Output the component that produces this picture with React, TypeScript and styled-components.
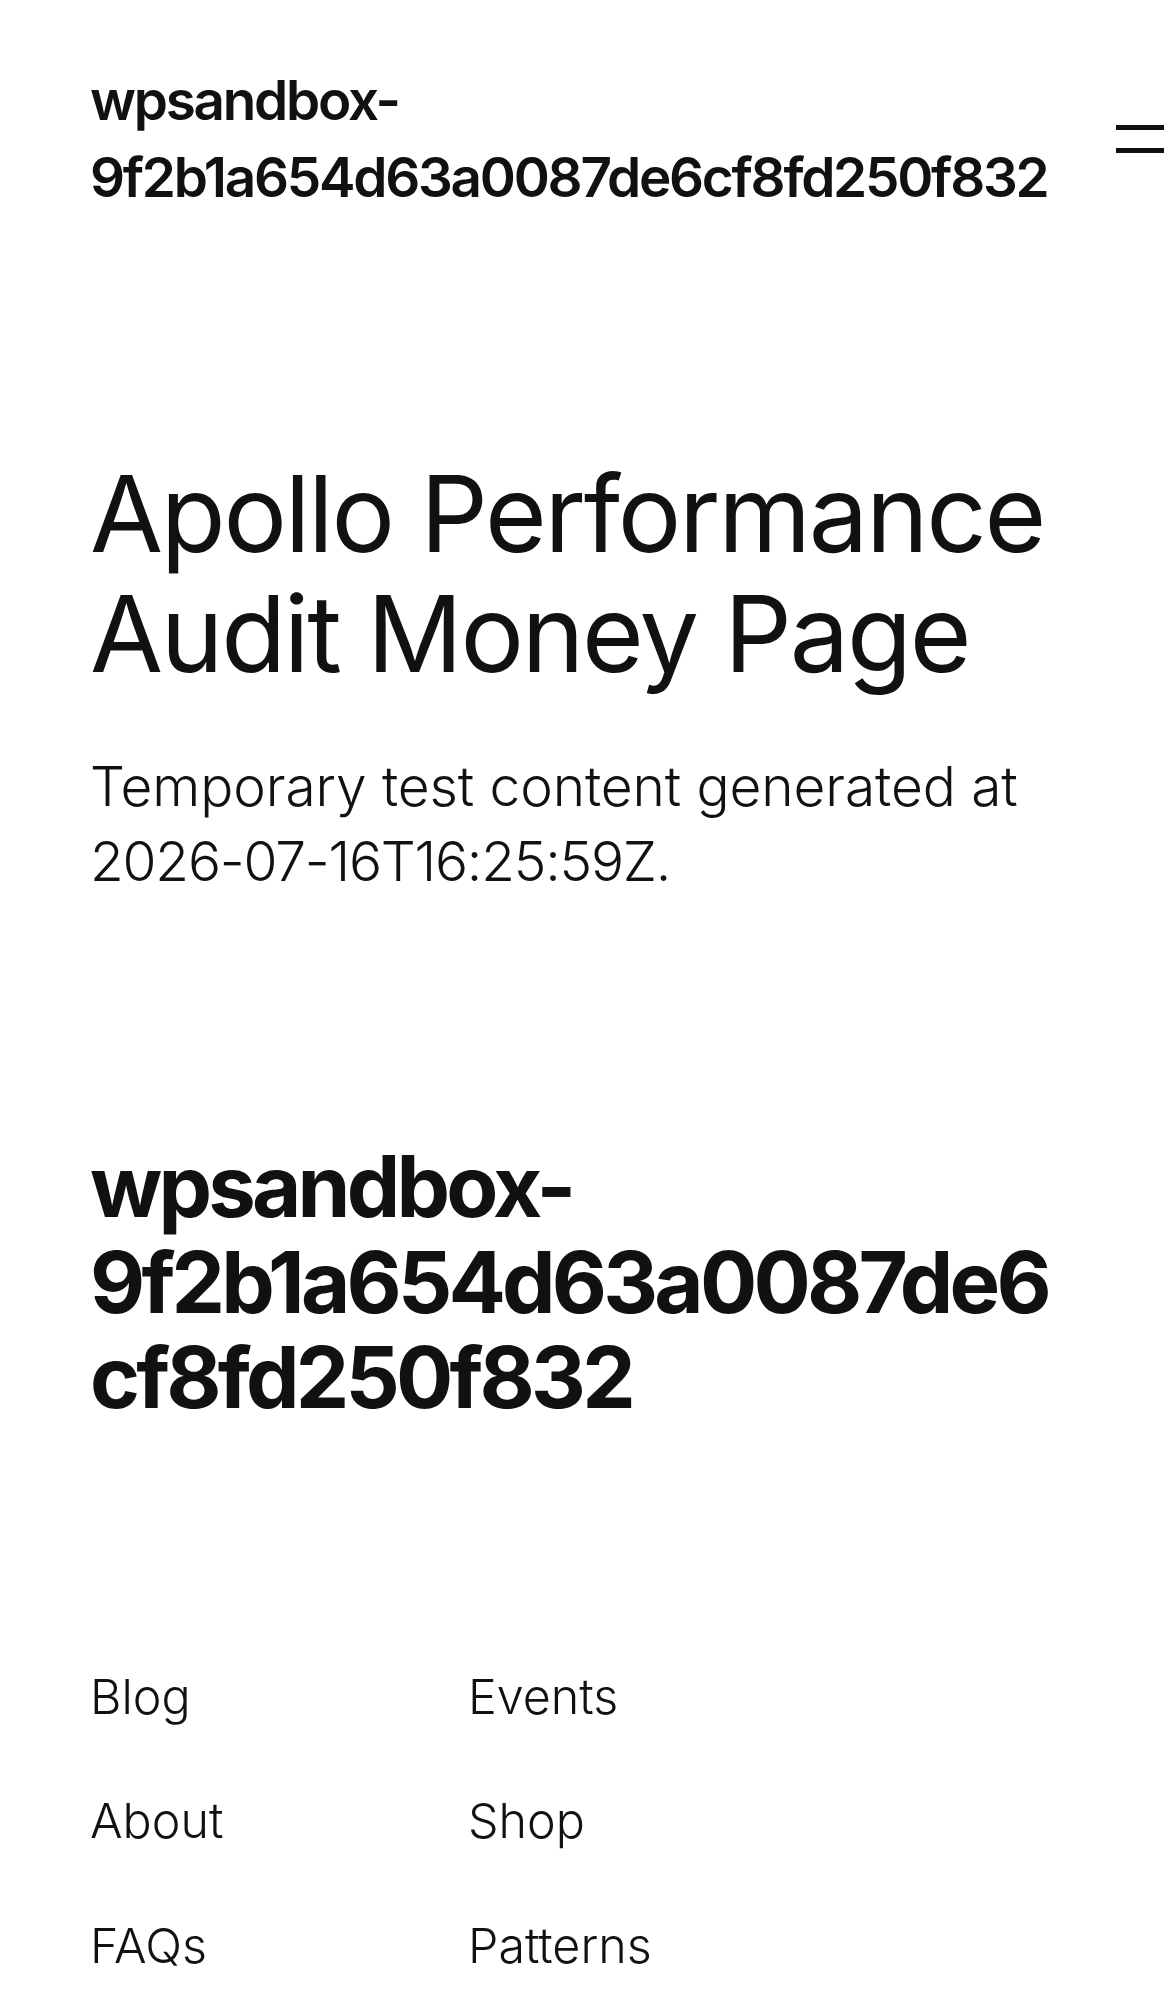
import React from "react";
import styled, { createGlobalStyle } from "styled-components";

const GlobalStyle = createGlobalStyle`
  html, body {
    margin: 0;
    padding: 0;
    background: #ffffff;
  }
  body {
    color: #111111;
    font-family: Inter, "Noto Sans", "Liberation Sans", sans-serif;
    -webkit-font-smoothing: antialiased;
  }
  * { box-sizing: border-box; }
`;

const Page = styled.div`
  display: flex;
  flex-direction: column;
  min-height: 1992px;
`;

const Header = styled.header`
  display: flex;
  align-items: center;
  padding: 62px 6px 0 90px;
`;

const SiteTitle = styled.p`
  margin: 0;
  flex: 0 1 990px;
  min-width: 0;
  font-size: 54.8px;
  line-height: 76.7px;
  font-weight: 600;
  letter-spacing: -2.25px;
  overflow-wrap: anywhere;
`;

const MenuButton = styled.button`
  margin: 0 0 0 auto;
  padding: 0;
  border: 0;
  background: transparent;
  display: flex;
  cursor: pointer;
`;

const Main = styled.main`
  display: flex;
  flex-direction: column;
  padding: 239px 90px 0;
`;

const Title = styled.h1`
  margin: 0;
  font-size: 106px;
  line-height: 1.125;
  font-weight: 400;
  letter-spacing: -2.3px;
`;

const Lead = styled.p`
  margin: 56px 0 0;
  font-size: 55px;
  line-height: 75px;
  font-weight: 300;
  letter-spacing: -0.1px;
`;

const Stamp = styled.span`
  letter-spacing: -1.2px;
`;

const Footer = styled.footer`
  display: flex;
  flex-direction: column;
  padding: 240px 90px 0;
`;

const FooterTitle = styled.h2`
  margin: 0;
  font-size: 85px;
  line-height: 1.125;
  font-weight: 700;
  letter-spacing: -3.8px;
  overflow-wrap: anywhere;
`;

const FooterNav = styled.nav`
  margin-top: 237px;
  display: grid;
  grid-template-columns: 378px auto;
  row-gap: 56.7px;
`;

const NavLink = styled.a`
  font-size: 48.4px;
  line-height: 67.8px;
  font-weight: 300;
  color: #111111;
  text-decoration: none;
  letter-spacing: 0;
`;

const links = ["Blog", "Events", "About", "Shop", "FAQs", "Patterns"];

export default function App() {
  return (
    <Page>
      <GlobalStyle />
      <Header>
        <SiteTitle>wpsandbox-9f2b1a654d63a0087de6cf8fd250f832</SiteTitle>
        <MenuButton aria-label="Open menu">
          <svg width="48" height="28" viewBox="0 0 48 28" fill="#111111">
            <rect x="0" y="0" width="48" height="5" />
            <rect x="0" y="23" width="48" height="5" />
          </svg>
        </MenuButton>
      </Header>
      <Main>
        <Title>Apollo Performance Audit Money Page</Title>
        <Lead>
          Temporary test content generated at <Stamp>2026-07-16T16:25:59Z.</Stamp>
        </Lead>
      </Main>
      <Footer>
        <FooterTitle>
          wpsandbox-9f2b1a654d63a0087de6
          <wbr />
          cf8fd250f832
        </FooterTitle>
        <FooterNav>
          {links.map((l) => (
            <NavLink key={l} href="#">
              {l}
            </NavLink>
          ))}
        </FooterNav>
      </Footer>
    </Page>
  );
}
